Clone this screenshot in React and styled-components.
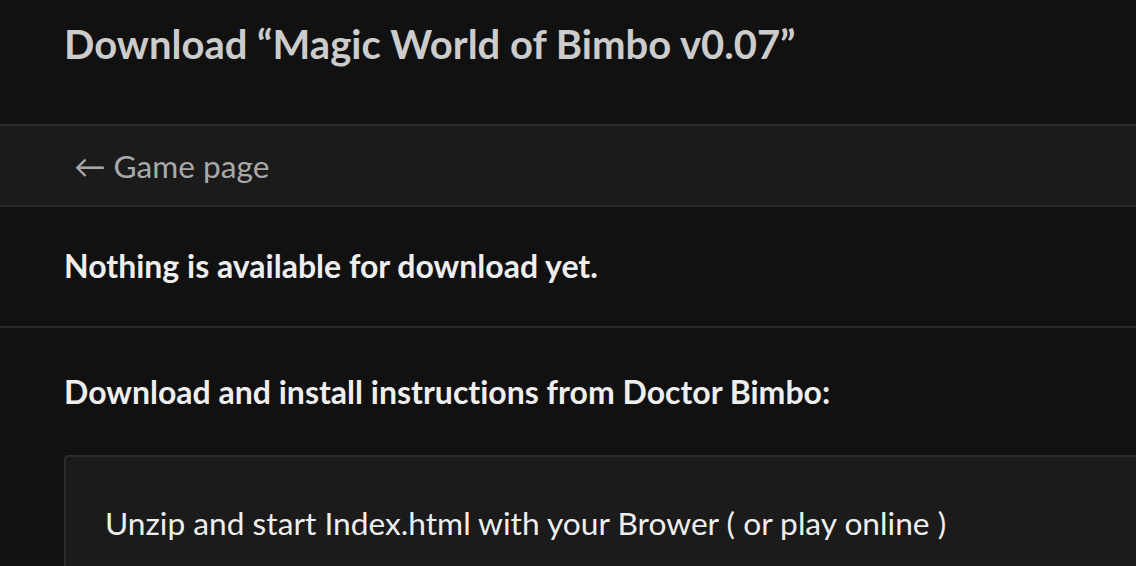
import styled, { createGlobalStyle } from "styled-components"

const Global = createGlobalStyle`
  html, body {
    margin: 0;
    padding: 0;
    background: #111111;
    overflow: hidden;
  }
  body {
    font-family: Lato, "Noto Sans", sans-serif;
    font-variant-ligatures: none;
  }
`;

const Page = styled.div`
    width: 1240px;
    background: #111111;
`;

const Header = styled.div`
    height: 124px;
    padding: 0 64px;
    box-sizing: border-box;
`;

const Title = styled.h1`
    margin: 0;
    padding-top: 20px;
    font-size: 40px;
    line-height: 1.2;
    font-weight: 700;
    color: #cccccc;
`;

const Nav = styled.div`
    height: 83px;
    box-sizing: border-box;
    display: flex;
    align-items: center;
    padding: 0 74px;
    background: #1b1b1b;
    border-top: 2px solid #2b2b2b;
    border-bottom: 2px solid #2b2b2b;
`;

const BackLink = styled.a`
    font-size: 31.6px;
    color: #a9a9a9;
    text-decoration: none;
    display: flex;
    align-items: center;
    gap: 8px;
`;

const Section = styled.div`
    padding: ${(p) => p.$pad};
    border-bottom: ${(p) => (p.$line ? "2px solid #2b2b2b" : "none")};
`;

const Notice = styled.p`
    margin: 0;
    font-size: 32px;
    line-height: 1.2;
    font-weight: 700;
    color: #eeeeee;
`;

const Box = styled.div`
    margin-top: 43px;
    background: #1b1b1b;
    border: 2px solid #2b2b2b;
    border-radius: 4px;
    padding: 47px 39px;
`;

const BoxText = styled.p`
    margin: 0;
    font-size: 31.7px;
    line-height: 1.2;
    color: #eeeeee;
`;

function App() {
    return (
        <Page>
            <Global />
            <Header>
                <Title>Download “Magic World of Bimbo v0.07”</Title>
            </Header>
            <Nav>
                <BackLink href="#">
                    <span>←</span>
                    <span>Game page</span>
                </BackLink>
            </Nav>
            <Section $pad="40px 64px 41px" $line>
                <Notice>Nothing is available for download yet.</Notice>
            </Section>
            <Section $pad="45px 64px">
                <Notice>Download and install instructions from Doctor Bimbo:</Notice>
                <Box>
                    <BoxText>Unzip and start Index.html with your Brower ( or play online )</BoxText>
                </Box>
            </Section>
        </Page>
    )
}

export default App;
